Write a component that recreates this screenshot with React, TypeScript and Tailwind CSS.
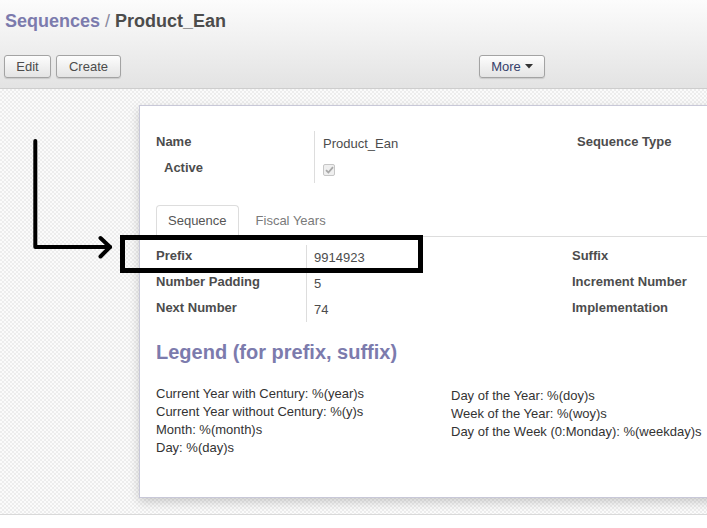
import React from "react";

function Btn({ children, w, className = "" }: { children: React.ReactNode; w: string; className?: string }) {
  return (
    <div
      className={`${w} h-[23px] flex items-center justify-center rounded-[3px] border border-[#a3a3a3] bg-linear-to-b from-[#fdfdfd] to-[#e4e4e4] shadow-[0_1px_1px_rgba(0,0,0,0.12)] text-[13px] ${className}`}
    >
      {children}
    </div>
  );
}

function Checkbox() {
  return (
    <div className="w-[12px] h-[12px] rounded-[2px] border border-[#c6c6c6] bg-[#efefef] flex items-center justify-center">
      <svg width="9" height="8" viewBox="0 0 9 8">
        <path d="M1 4.2 L3.4 6.5 L8 1.2" fill="none" stroke="#a8a8a8" strokeWidth="1.8" />
      </svg>
    </div>
  );
}

export default function App() {
  const label = "h-[26px] flex items-center font-bold text-[13px] text-[#4c4c4c]";
  const value = "h-[26px] flex items-center text-[13px] text-[#4c4c4c]";
  return (
    <div className="relative w-[707px] h-[528px] overflow-hidden bg-white font-['Liberation_Sans',Arial,sans-serif] text-[13px] text-[#4c4c4c]">
      {/* Header */}
      <div className="h-[89px] border-b border-[#cdcdcd] bg-linear-to-b from-[#fcfcfc] to-[#e3e3e3]">
        <div className="pt-[10px] pl-[5px] h-[32px] text-[18px] leading-[22px] font-bold">
          <span className="text-[#7c7bad]">Sequences</span>
          <span className="text-[#8a8a9e] font-normal"> / </span>
          <span className="text-[#4c4c4c]">Product_Ean</span>
        </div>
        <div className="mt-[23px] flex pl-[4px]">
          <Btn w="w-[47px]">Edit</Btn>
          <Btn w="w-[65px]" className="ml-[5px]">Create</Btn>
          <Btn w="w-[66px]" className="ml-[358px] text-[#35406a] gap-[4px]">
            <span>More</span>
            <svg width="8" height="5" viewBox="0 0 8 5">
              <path d="M0 0 L8 0 L4 4.5 Z" fill="#333" />
            </svg>
          </Btn>
        </div>
      </div>

      {/* Content */}
      <div className="h-[426px] border-b border-[#d9d9d9] overflow-hidden pt-[16px] pl-[139px] bg-[repeating-conic-gradient(#ededed_0%_25%,#fbfbfb_0%_50%)] bg-[length:4px_4px]">
        <div className="w-[640px] h-[393px] bg-white border border-[#c8c8d8] shadow-[0_4px_10px_rgba(0,0,0,0.18)] pl-[16px] pt-[23px]">
          {/* top group */}
          <div className="flex">
            <div className="w-[158px]">
              <div className={label}>Name</div>
              <div className={`${label} pl-[8px]`}>Active</div>
            </div>
            <div className="w-[263px] mt-[2px] h-[52px] border-l border-[#dddddd] pl-[8px]">
              <div className={value}>Product_Ean</div>
              <div className="h-[26px] flex items-center">
                <Checkbox />
              </div>
            </div>
            <div className={label}>Sequence Type</div>
          </div>

          {/* tabs */}
          <div className="mt-[22px] flex h-[32px] border-b border-[#dddddd]">
            <div className="h-[32px] -mb-px px-[11px] flex items-center border border-[#dddddd] border-b-white rounded-t-[4px] bg-white text-[#555555]">
              Sequence
            </div>
            <div className="h-[31px] px-[17px] flex items-center text-[#7a7a7a]">Fiscal Years</div>
          </div>

          {/* second group */}
          <div className="mt-[6px] flex">
            <div className="w-[150px]">
              <div className={label}>Prefix</div>
              <div className={label}>Number Padding</div>
              <div className={label}>Next Number</div>
            </div>
            <div className="w-[266px] mt-[2px] h-[77px] border-l border-[#dddddd] pl-[7px]">
              <div className={value}>9914923</div>
              <div className={value}>5</div>
              <div className={value}>74</div>
            </div>
            <div>
              <div className={label}>Suffix</div>
              <div className={label}>Increment Number</div>
              <div className={label}>Implementation</div>
            </div>
          </div>

          {/* legend */}
          <div className="mt-[18px] h-[24px] leading-[24px] text-[20px] font-bold text-[#7c7bad]">
            Legend (for prefix, suffix)
          </div>
          <div className="mt-[21px] grid grid-cols-[295px_auto] leading-[18px] text-[13px] text-[#333333]">
            <div>
              <div>Current Year with Century: %(year)s</div>
              <div>Current Year without Century: %(y)s</div>
              <div>Month: %(month)s</div>
              <div>Day: %(day)s</div>
            </div>
            <div className="pt-[2px] whitespace-nowrap">
              <div>Day of the Year: %(doy)s</div>
              <div>Week of the Year: %(woy)s</div>
              <div>Day of the Week (0:Monday): %(weekday)s</div>
            </div>
          </div>
        </div>
      </div>

      {/* Annotation overlay */}
      <svg className="absolute left-0 top-0 pointer-events-none" width="707" height="528" viewBox="0 0 707 528">
        <path d="M35.3 141 L35.3 247 L110 247" fill="none" stroke="#000" strokeWidth="4" strokeLinecap="round" strokeLinejoin="round" />
        <path d="M100.5 238 L110 247 L100.5 256.5" fill="none" stroke="#000" strokeWidth="4" strokeLinecap="round" strokeLinejoin="round" />
        <rect x="122.5" y="237.5" width="298" height="33" fill="none" stroke="#000" strokeWidth="5" />
      </svg>
    </div>
  );
}
